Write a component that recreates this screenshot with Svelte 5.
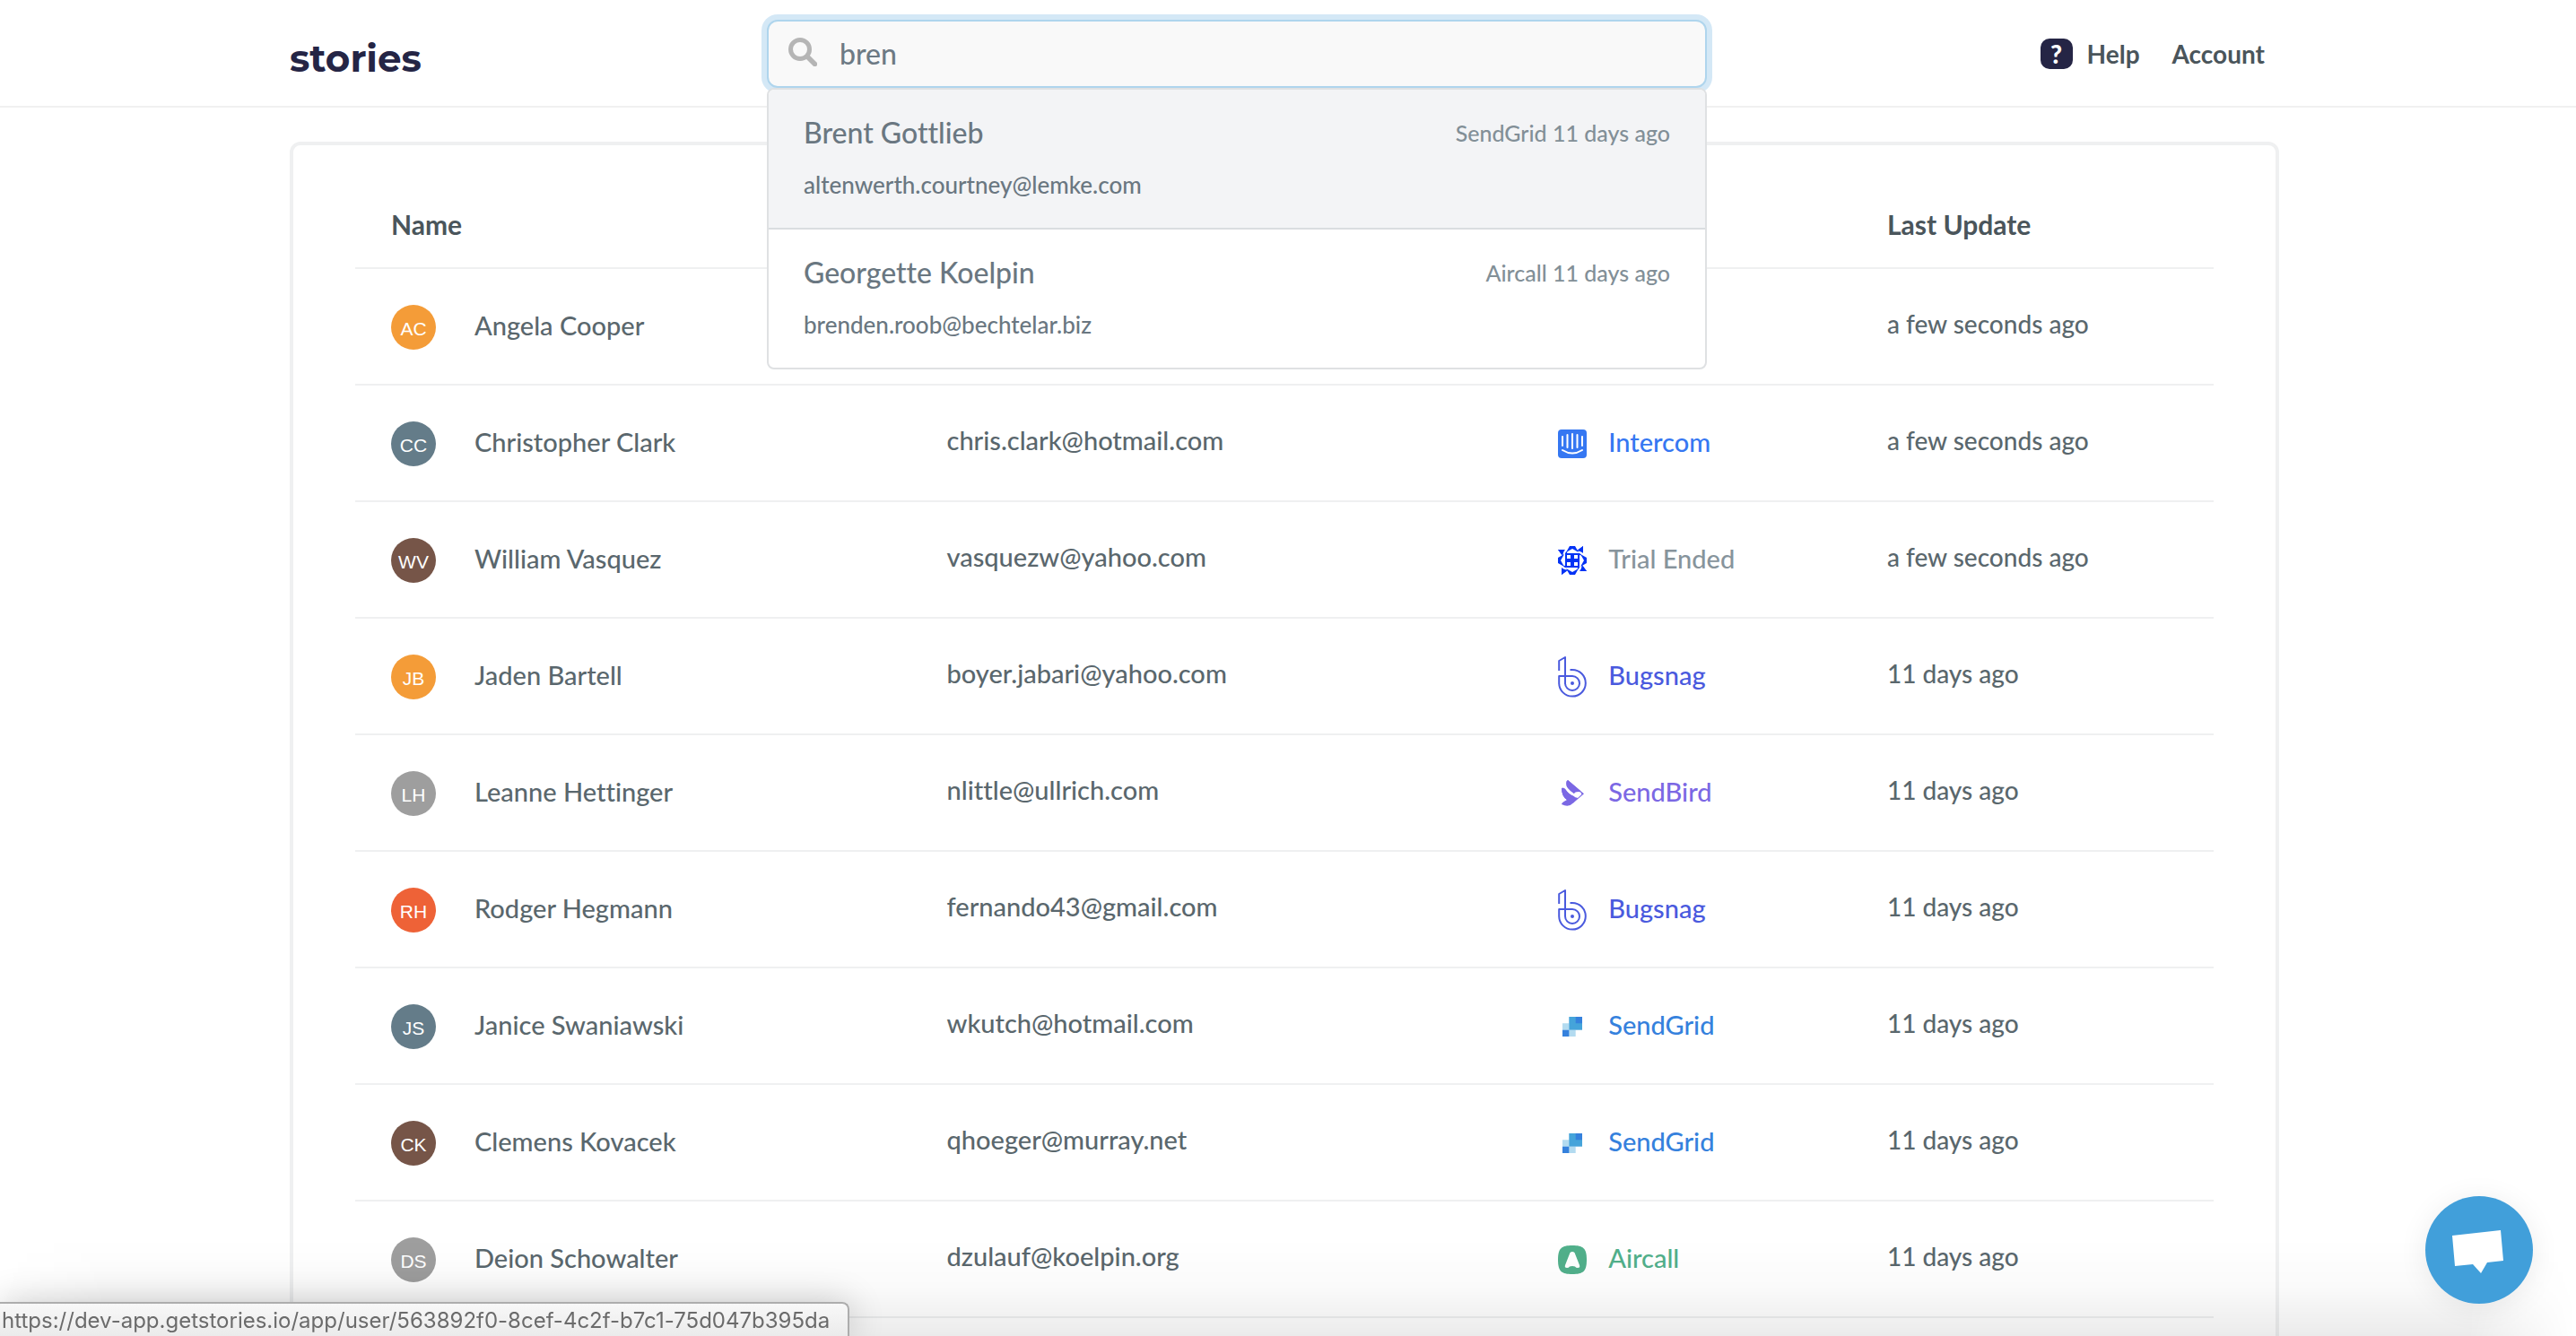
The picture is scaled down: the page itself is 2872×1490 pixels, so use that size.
<script>
    import { onMount } from "svelte";

    let query = $state("bren");
    let searchInput;

    const results = [
        { name: "Brent Gottlieb", email: "altenwerth.courtney@lemke.com", seen: "SendGrid 11 days ago" },
        { name: "Georgette Koelpin", email: "brenden.roob@bechtelar.biz", seen: "Aircall 11 days ago" },
    ];

    const users = [
        { name: "Angela Cooper", initials: "AC", color: "orange", email: "", source: "", updated: "a few seconds ago" },
        { name: "Christopher Clark", initials: "CC", color: "slate", email: "chris.clark@hotmail.com", source: "Intercom", updated: "a few seconds ago" },
        { name: "William Vasquez", initials: "WV", color: "brown", email: "vasquezw@yahoo.com", source: "Trial Ended", updated: "a few seconds ago" },
        { name: "Jaden Bartell", initials: "JB", color: "orange", email: "boyer.jabari@yahoo.com", source: "Bugsnag", updated: "11 days ago" },
        { name: "Leanne Hettinger", initials: "LH", color: "grey", email: "nlittle@ullrich.com", source: "SendBird", updated: "11 days ago" },
        { name: "Rodger Hegmann", initials: "RH", color: "red", email: "fernando43@gmail.com", source: "Bugsnag", updated: "11 days ago" },
        { name: "Janice Swaniawski", initials: "JS", color: "slate", email: "wkutch@hotmail.com", source: "SendGrid", updated: "11 days ago" },
        { name: "Clemens Kovacek", initials: "CK", color: "brown", email: "qhoeger@murray.net", source: "SendGrid", updated: "11 days ago" },
        { name: "Deion Schowalter", initials: "DS", color: "grey", email: "dzulauf@koelpin.org", source: "Aircall", updated: "11 days ago" },
    ];

    onMount(() => searchInput.focus());
</script>

{#snippet sourceIcon(source)}
    {#if source === "Intercom"}
        <svg class="icon" viewBox="0 0 32 32" aria-hidden="true">
            <rect width="32" height="32" rx="4" fill="#3577f2" />
            <path d="M5 8v10M10.500 6v14M16 5v16M21.500 6v14M27 8v10M5 23q11 7 22 0" fill="none" stroke="#fff" stroke-width="2" stroke-linecap="round" />
        </svg>
    {:else if source === "Trial Ended"}
        <svg class="icon" viewBox="0 0 32 32" aria-hidden="true">
            <g fill="#0433f5">
                {#each [0, 90, 180, 270] as angle}
                    <path transform="rotate({angle} 16 16)" d="M13 0h6l4 7-7-4-7 4zM0 4h8l-4 5zM21 5l7-5v7zM8 8l3-4-1 4z" />
                {/each}
                <path d="M8 8h16v16H8z" />
            </g>
            <path d="M10 10h4v4h-4zM18 10h4v4h-4zM10 18h4v4h-4zM18 18h4v4h-4z" fill="#fff" />
        </svg>
    {:else if source === "Bugsnag"}
        <svg class="icon tall" viewBox="0 0 32 46" aria-hidden="true">
            <path d="M1.200 16V5L8 1V30a8 8 0 1 0 8-8H1.200v8A14.800 14.800 0 1 0 16 15h-2.500" fill="none" stroke="#4a5ade" stroke-width="2" stroke-linejoin="round" />
            <circle cx="16" cy="30" r="2" fill="#4a5ade" />
        </svg>
    {:else if source === "SendBird"}
        <svg class="icon" viewBox="0 0 32 32" aria-hidden="true">
            <path d="M11 1L29 16.300 17 26.500Q12 32 4 28 4 26 10 23 4 19 4 10 6 9 8 11 12 17 17.500 19 19 21 22 21L26.300 17Q26 14 23 14 18 14 18 16 9 10 9.300 5 9 2 11 1z" fill="#7b68e4" />
            <path d="M4 10q2-1 4 1 4 6 9.500 8 1.500 2 4.500 2l-5 5.500L10 23Q4 19 4 10zM11 1l14 12q-6 0-7 3-9-6-8.700-11Q9 2 11 1z" fill="#7b68e4" />
        </svg>
    {:else if source === "SendGrid"}
        <svg class="icon" viewBox="0 0 32 32" aria-hidden="true">
            <path d="M5 12.300h7.300v14.700H5zM12.300 19.700h7.400V27h-7.400z" fill="#b3dbf0" />
            <path d="M12.300 5h14.700v14.700H12.300z" fill="#45a4da" />
            <path d="M19.700 5H27v7.300h-7.300zM5 19.700h7.300V27H5z" fill="#3581dd" />
        </svg>
    {:else if source === "Aircall"}
        <svg class="icon" viewBox="0 0 32 32" aria-hidden="true">
            <path d="M16 0C28 0 32 3 32 16S28 32 16 32 0 29 0 16 4 0 16 0z" fill="#51b08b" />
            <path d="M13.500 8Q16 6 18.500 8L24 22q1 3-2 3-2 0-3-1.500-3-1-6 0Q12 25 10 25q-3 0-2-3z" fill="#fff" />
        </svg>
    {/if}
{/snippet}

<header class="topbar">
    <div class="container topbar-row">
        <a class="logo" href="/">stories</a>

        <div class="search">
            <label class="search-box">
                <svg class="search-icon" viewBox="0 0 32 32" aria-label="Search">
                    <circle cx="13" cy="13" r="10.500" fill="none" stroke="#b5b5b5" stroke-width="5" />
                    <path d="M21 21l8.500 8.500" stroke="#b5b5b5" stroke-width="5.500" stroke-linecap="round" />
                </svg>
                <input type="text" bind:value={query} bind:this={searchInput} spellcheck="false" />
            </label>
            <ul class="results">
                {#each results as result, i}
                    <li>
                        <a href="/app/user" class="result" class:active={i === 0}>
                            <span class="result-top">
                                <span class="result-name">{result.name}</span>
                                <span class="result-seen">{result.seen}</span>
                            </span>
                            <span class="result-email">{result.email}</span>
                        </a>
                    </li>
                {/each}
            </ul>
        </div>

        <nav class="links">
            <a href="/help">
                <span class="help-icon" aria-hidden="true">?</span>
                Help
            </a>
            <a href="/account">Account</a>
        </nav>
    </div>
</header>

<main class="container">
    <section class="card">
        <table>
            <thead>
                <tr>
                    <th class="col-name">Name</th>
                    <th class="col-email"></th>
                    <th class="col-source"></th>
                    <th>Last Update</th>
                </tr>
            </thead>
            <tbody>
                {#each users as user}
                    <tr>
                        <td>
                            <div class="person">
                                <span class="avatar {user.color}">{user.initials}</span>
                                <span class="label">{user.name}</span>
                            </div>
                        </td>
                        <td>{user.email}</td>
                        <td>
                            <div class="source {user.source.toLowerCase().replace(' ', '-')}">
                                {@render sourceIcon(user.source)}
                                <span class="label">{user.source}</span>
                            </div>
                        </td>
                        <td class="updated">{user.updated}</td>
                    </tr>
                {/each}
            </tbody>
        </table>
    </section>
</main>

<div class="fade"></div>

<button class="chat" aria-label="Open chat">
    <svg viewBox="0 0 120 120" aria-hidden="true">
        <path d="M30 44l54-6 3 34-18 2-7 12-9-10-20 2z" fill="#fff" />
    </svg>
</button>

<div class="status">https://dev-app.getstories.io/app/user/563892f0-8cef-4c2f-b7c1-75d047b395da</div>

<style>
    :global(body) {
        background: #fff;
        color: #5a676d;
        font-family: "Lato", sans-serif;
        font-size: 28px;
        font-weight: 500;
        font-variant-ligatures: none;
        line-height: 40px;
    }
    :global(#app) {
        height: 100vh;
        overflow: hidden;
    }
    a {
        color: inherit;
        text-decoration: none;
    }
    .container {
        box-sizing: border-box;
        width: 100%;
        padding: 0 331px 0 323px;
    }

    /* top bar */
    .topbar {
        border-bottom: 2px solid #f0f0f0;
    }
    .topbar-row {
        display: grid;
        grid-template-columns: 532fr 1048fr 638fr;
        align-items: center;
        height: 118px;
        padding-top: 2px;
    }
    .logo {
        color: #252545;
        font-family: "Montserrat", "Inter", sans-serif;
        font-size: 42px;
        font-weight: 700;
        padding-top: 10px;
    }
    .search {
        position: relative;
    }
    .search-box {
        display: flex;
        align-items: center;
        box-sizing: border-box;
        height: 76px;
        padding: 0 22px;
        border: 2px solid #afd5ed;
        border-radius: 12px;
        background: #f9f9f9;
        box-shadow: 0 0 0 6px #d4e8f6;
    }
    .search-icon {
        width: 32px;
        height: 32px;
        margin-right: 25px;
        margin-bottom: 4px;
    }
    input {
        flex: 1;
        min-width: 0;
        padding: 0;
        border: 0;
        outline: 0;
        background: none;
        color: #6d7a84;
        caret-color: transparent;
        font: inherit;
        font-size: 32px;
    }
    .results {
        position: absolute;
        z-index: 2;
        top: 100%;
        left: 0;
        right: 0;
        margin: 0;
        padding: 0;
        overflow: hidden;
        border: 2px solid #dfe1e3;
        border-radius: 8px;
        background: #fff;
        list-style: none;
    }
    .result {
        display: block;
        padding: 28px 39px;
        color: #6a7781;
    }
    .result.active {
        border-bottom: 2px solid #dadde0;
        background: #f3f4f6;
    }
    .result-top {
        display: flex;
        justify-content: space-between;
        margin-bottom: 18px;
    }
    .result-name {
        font-size: 32px;
    }
    .result-seen {
        color: #828f97;
        font-size: 25px;
    }
    .result-email {
        display: block;
        font-size: 26px;
    }
    .links {
        display: flex;
        justify-content: flex-end;
        gap: 36px;
        padding-right: 16px;
        color: #4a555b;
        font-weight: 700;
    }
    .links a {
        display: flex;
        align-items: center;
    }
    .help-icon {
        width: 36px;
        height: 34px;
        margin-right: 16px;
        border-radius: 10px;
        background: #252545;
        color: #fff;
        font-size: 28px;
        font-weight: 900;
        line-height: 34px;
        text-align: center;
    }

    /* users table */
    .card {
        margin-top: 38px;
        padding: 58px 69px;
        border: 4px solid #eff0f1;
        border-radius: 12px;
    }
    table {
        width: 100%;
        border-spacing: 0;
        table-layout: fixed;
    }
    .col-name {
        width: 29.9%;
    }
    .col-email {
        width: 32.9%;
    }
    .col-source {
        width: 17.7%;
    }
    th,
    td {
        box-sizing: border-box;
        padding: 0 40px;
        border-bottom: 2px solid #eff0f1;
        text-align: left;
    }
    th {
        height: 80px;
        padding-bottom: 18px;
        color: #4a555b;
        font-size: 30px;
    }
    td {
        height: 130px;
        padding-bottom: 6px;
        font-size: 29px;
    }
    .updated {
        font-size: 28px;
    }
    .person,
    .source {
        display: flex;
        align-items: center;
        padding-top: 8px;
    }
    .label {
        padding-bottom: 4px;
    }
    .avatar {
        width: 50px;
        height: 50px;
        margin-right: 43px;
        border-radius: 50%;
        color: #fff;
        font-family: "Liberation Sans", sans-serif;
        font-size: 21px;
        line-height: 54px;
        text-align: center;
    }
    .orange { background: #f49c38; }
    .slate { background: #647c89; }
    .brown { background: #765548; }
    .grey { background: #9e9e9e; }
    .red { background: #ee6237; }
    .icon {
        width: 32px;
        height: 32px;
        margin-right: 24px;
    }
    .icon.tall {
        height: 46px;
    }
    .intercom { color: #3577f2; }
    .trial-ended { color: #87949c; }
    .bugsnag { color: #4a5ade; }
    .sendbird { color: #7b68e4; }
    .sendgrid { color: #3581dd; }
    .aircall { color: #51b08b; }

    /* things that float over the page */
    .fade {
        position: fixed;
        bottom: 0;
        left: 0;
        right: 0;
        height: 110px;
        background: linear-gradient(rgba(0, 0, 0, 0), rgba(0, 0, 0, 0.02) 50%, rgba(0, 0, 0, 0.08));
        mask-image: linear-gradient(to right, transparent, #000 120px, #000 calc(100% - 120px), transparent);
        pointer-events: none;
    }
    .chat {
        position: fixed;
        right: 48px;
        bottom: 36px;
        width: 120px;
        height: 120px;
        padding: 0;
        border: 0;
        border-radius: 50%;
        background: #419fda;
        box-shadow: 0 4px 32px rgba(0, 0, 0, 0.08);
    }
    .chat svg {
        display: block;
    }
    .status {
        position: fixed;
        bottom: 0;
        left: 0;
        padding: 2px 20px 0 2px;
        border: 2px solid #adadad;
        border-width: 2px 2px 0 0;
        border-top-right-radius: 8px;
        background: linear-gradient(#f8f8f8, #ebebeb);
        box-shadow: 0 0 40px rgba(0, 0, 0, 0.2);
        color: #6b6b6b;
        font-family: "Inter", sans-serif;
        font-size: 24px;
        font-weight: 400;
        line-height: 34px;
    }
</style>
